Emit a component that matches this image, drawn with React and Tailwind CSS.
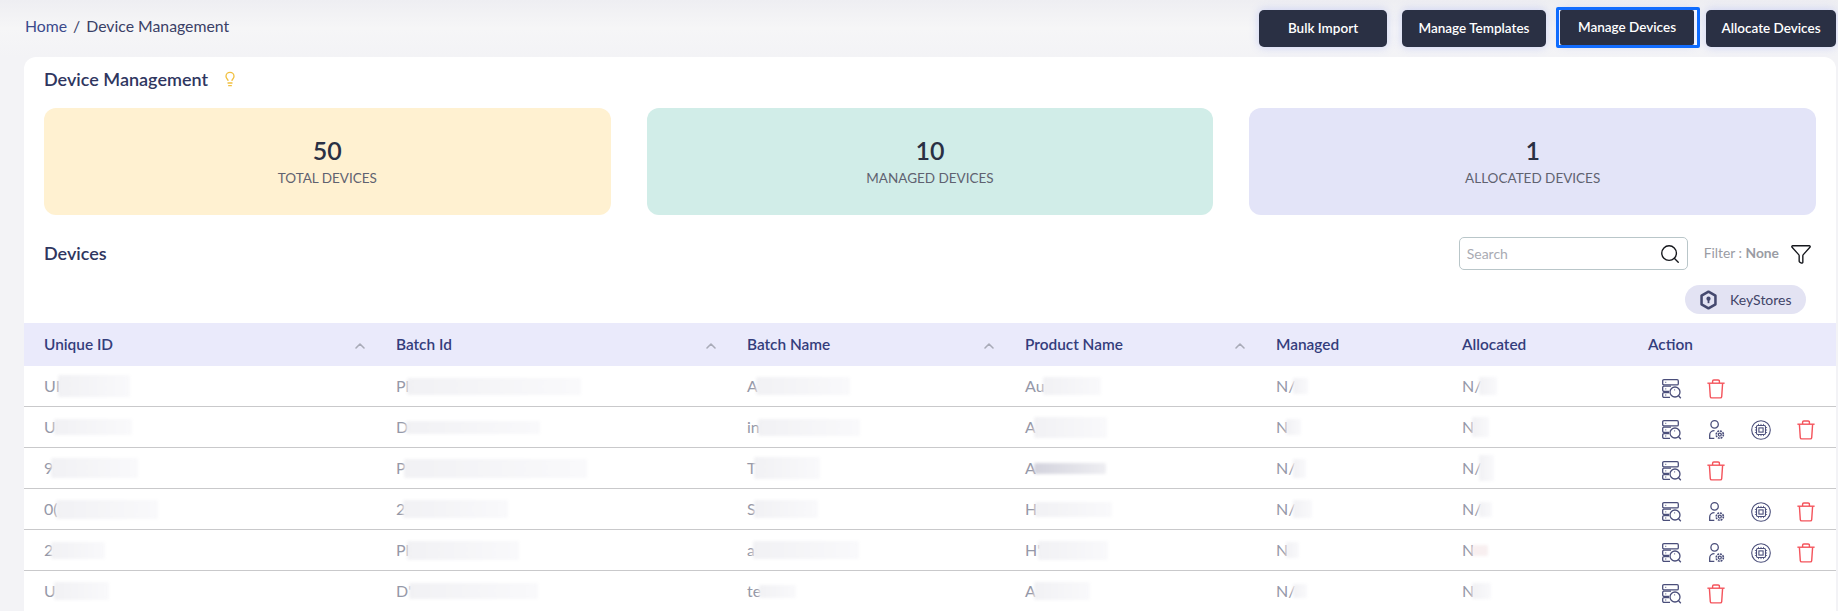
import React from 'react';
import { Lightbulb, Search, Funnel, ChevronUp } from 'lucide-react';

const columns = [
  { label: 'Unique ID', sort: true },
  { label: 'Batch Id', sort: true },
  { label: 'Batch Name', sort: true },
  { label: 'Product Name', sort: true },
  { label: 'Managed' },
  { label: 'Allocated' },
];

const gridCols = 'grid grid-cols-[352px_351px_278px_251px_186px_186px_1fr]';
const defaultTint = 'bg-gradient-to-r from-[#f1f1f4] to-[#f9f9fb]';

// each cell: visible start of the value, size of the blurred patch after it, optional tint
const rows = [
  { full: false, cells: [['UI', 'w-[72px] h-[22px]'], ['Pl', 'w-[174px] h-[17px]'], ['A', 'w-[94px] h-[18px]'], ['Au', 'w-[58px] h-[18px]'], ['N/', 'w-[15px] h-[16px]'], ['N/', 'w-[18px] h-[18px]']] },
  { full: true, cells: [['U', 'w-[78px] h-[16px]'], ['D', 'w-[134px] h-[13px]'], ['in', 'w-[102px] h-[17px]'], ['A', 'w-[73px] h-[21px]'], ['N', 'w-[15px] h-[16px]'], ['N', 'w-[17px] h-[20px]']] },
  { full: false, cells: [['9', 'w-[87px] h-[20px]'], ['P', 'w-[183px] h-[19px]'], ['T', 'w-[66px] h-[22px]'], ['A', 'w-[72px] h-[11px]', 'bg-gradient-to-r from-[#d3d3dd] to-[#eeeef2]'], ['N/', 'w-[13px] h-[19px]'], ['N/', 'w-[15px] h-[26px]']] },
  { full: true, cells: [['0(', 'w-[102px] h-[19px]'], ['2', 'w-[105px] h-[18px]'], ['S', 'w-[64px] h-[18px]'], ['H', 'w-[77px] h-[15px]'], ['N/', 'w-[19px] h-[18px]'], ['N/', 'w-[13px] h-[15px]']] },
  { full: true, cells: [['2', 'w-[54px] h-[17px]'], ['Pl', 'w-[112px] h-[19px]'], ['a', 'w-[106px] h-[18px]'], ["H'", 'w-[70px] h-[19px]'], ['N', 'w-[13px] h-[16px]'], ['N', 'w-[16px] h-[11px]', 'bg-[#f8eff0]']] },
  { full: false, cells: [['U', 'w-[55px] h-[18px]'], ["D'", 'w-[129px] h-[16px]'], ['te', 'w-[37px] h-[13px]'], ['A', 'w-[56px] h-[18px]'], ['N/', 'w-[14px] h-[14px]'], ['N', 'w-[19px] h-[16px]']] },
];

function ServerSearch() {
  return (
    <svg width="20" height="20" viewBox="0 0 20 20" fill="none" stroke="#4a4e7a" strokeWidth="1.3">
      <rect x="0.7" y="0.7" width="15.6" height="5.2" rx="1.2" />
      <path d="M9 7.2H2a1.3 1.3 0 0 0-1.3 1.3v2.6A1.3 1.3 0 0 0 2 12.4h5" />
      <path d="M7 13.6H2a1.3 1.3 0 0 0-1.3 1.3v2.2A1.3 1.3 0 0 0 2 18.4h6" />
      <circle cx="13" cy="13" r="5" />
      <path d="M16.6 16.8l2.2 2.4" />
      <path d="M3.4 3.3h.8M3.4 9.8h.8M3.4 16h.8M12.3 10.8h.8" />
    </svg>
  );
}

function UserGear() {
  return (
    <svg width="16" height="20" viewBox="0 0 16 20" fill="none" stroke="#4a4e7a" strokeWidth="1.3">
      <circle cx="5.6" cy="4.4" r="3.7" />
      <path d="M5.5 10.6C2.6 10.6.7 12.6.7 15v3.3h4.6" />
      <circle cx="10.8" cy="14.6" r="3.6" strokeDasharray="1.9 0.9" strokeWidth="1.6" />
      <circle cx="10.8" cy="14.6" r="1.5" />
    </svg>
  );
}

function ChipCircle() {
  return (
    <svg width="20" height="20" viewBox="0 0 20 20" fill="none" stroke="#4a4e7a" strokeWidth="1.1">
      <circle cx="10" cy="10" r="9.3" />
      <rect x="5.5" y="5.5" width="9" height="9" rx="1.2" />
      <rect x="7.9" y="7.9" width="4.2" height="4.2" />
      <path d="M7.5 3.9v1.4M10 3.9v1.4M12.5 3.9v1.4M7.5 14.7v1.4M10 14.7v1.4M12.5 14.7v1.4M3.9 7.5h1.4M3.9 10h1.4M3.9 12.5h1.4M14.7 7.5h1.4M14.7 10h1.4M14.7 12.5h1.4" strokeWidth="0.8" />
    </svg>
  );
}

function Trash() {
  return (
    <svg width="18" height="20" viewBox="0 0 18 20" fill="none" stroke="#f4545c" strokeWidth="1.4">
      <path d="M0.4 4.2h17.2" />
      <path d="M5.6 4V2.2A1.2 1.2 0 0 1 6.8 1h4.4a1.2 1.2 0 0 1 1.2 1.2V4" />
      <path d="M2.4 4.4l.9 13.2a1.4 1.4 0 0 0 1.4 1.3h8.6a1.4 1.4 0 0 0 1.4-1.3l.9-13.2" />
    </svg>
  );
}

function KeyHex() {
  return (
    <svg width="19" height="20" viewBox="0 0 18 19" fill="none">
      <path d="M9 1.6l6.6 3.8v8.2L9 17.4l-6.6-3.8V5.4z" stroke="#45496f" strokeWidth="2.4" strokeLinejoin="round" />
      <circle cx="9" cy="8.2" r="2" fill="#45496f" />
      <path d="M9 8.5v4" stroke="#45496f" strokeWidth="1.7" />
    </svg>
  );
}

function TopButton({ children, className = '' }) {
  return (
    <button className={`h-[37px] rounded-[5px] bg-[#2a3044] text-white text-[13.5px] font-semibold shadow-[0_0_10px_rgba(90,110,240,0.28)] ${className}`}>
      {children}
    </button>
  );
}

function StatCard({ value, label, color }) {
  return (
    <div className={`h-[107px] rounded-[12px] flex flex-col items-center pt-[26px] ${color}`}>
      <div className="text-[25px] leading-[32px] font-semibold text-[#2a3044]">{value}</div>
      <div className="mt-[2px] text-[13.5px] leading-[20px] text-[#5f6270]">{label}</div>
    </div>
  );
}

export default function App() {
  return (
    <div className="h-[611px] overflow-hidden bg-[#f3f3f6] font-['Lato',sans-serif]">
      {/* Top bar */}
      <div className="h-[57px] flex justify-between bg-gradient-to-b from-[#eeeef2] via-[#f6f6f7] to-[#f3f3f6]">
        <div className="pl-[25px] pt-[15px] text-[15.8px] leading-[22px] text-[#3a4066]">
          <span className="text-[#3b4a8c]">Home</span>
          <span className="mx-[6px]">/</span>
          <span>Device Management</span>
        </div>
        <div className="flex items-start pt-[10px] pr-[2px]">
          <TopButton className="w-[128px]">Bulk Import</TopButton>
          <TopButton className="w-[144px] ml-[15px]">Manage Templates</TopButton>
          <div className="ml-[10px] -mt-[3px] w-[144px] h-[41px] border-[3px] border-[#0b6cff] rounded-[2px] bg-white flex pl-px pr-[3px]">
            <TopButton className="flex-1 !h-full !rounded-[2px]">Manage Devices</TopButton>
          </div>
          <TopButton className="w-[130px] ml-[6px]">Allocate Devices</TopButton>
        </div>
      </div>

      {/* Main card */}
      <div className="ml-[24px] mr-[2px] h-[554px] bg-white rounded-t-[12px] overflow-hidden">
        <div className="h-[51px] pl-[20px] pt-[8px] flex items-center gap-[14px] pb-[15px]">
          <h1 className="text-[18px] font-semibold text-[#2f365f]">Device Management</h1>
          <Lightbulb size={16} className="text-[#f1c040]" strokeWidth={2} />
        </div>

        <div className="grid grid-cols-3 gap-[36px] pl-[20px] pr-[20px]">
          <StatCard value="50" label="TOTAL DEVICES" color="bg-[#fff1d1]" />
          <StatCard value="10" label="MANAGED DEVICES" color="bg-[#d1ede8]" />
          <StatCard value="1" label="ALLOCATED DEVICES" color="bg-[#e3e4f8]" />
        </div>

        <div className="flex items-start justify-between pl-[20px] pr-[24px] pt-[22px]">
          <h2 className="text-[18px] leading-[32px] font-semibold text-[#2f365f]">Devices</h2>
          <div className="flex items-center">
            <div className="w-[229px] h-[33px] border border-[#b9c6c9] rounded-[5px] flex items-center justify-between pl-[7px] pr-[6px]">
              <span className="text-[14px] text-[#a9abb3]">Search</span>
              <Search size={22} className="text-[#15171c]" strokeWidth={1.5} />
            </div>
            <span className="ml-[16px] text-[13.8px] text-[#9a9ca4]">Filter : <b className="font-bold">None</b></span>
            <Funnel size={22} className="ml-[11px] text-[#15171c]" strokeWidth={1.5} />
          </div>
        </div>

        <div className="flex justify-end pr-[30px] mt-[15px]">
          <div className="w-[121px] h-[29px] rounded-full bg-[#e3e3f3] flex items-center pl-[14px] gap-[12px]">
            <KeyHex />
            <span className="text-[14px] text-[#3f4468]">KeyStores</span>
          </div>
        </div>

        {/* Table */}
        <div className={`${gridCols} mt-[9px] h-[43px] items-center bg-[#eaeafb] text-[15.4px] font-semibold text-[#343d7c]`}>
          {columns.map((c) => (
            <div key={c.label} className="pl-[20px] pr-[8px] flex items-center justify-between">
              <span>{c.label}</span>
              {c.sort && <ChevronUp size={16} className="text-[#a9abb8] mt-[4px]" strokeWidth={2.4} />}
            </div>
          ))}
          <div className="pl-[20px]">Action</div>
        </div>

        {rows.map((row, i) => (
          <div key={i} className={`${gridCols} h-[41px] items-center border-b border-[#c9c9cb] text-[16px] text-[#9598a8]`}>
            {row.cells.map(([start, patch, tint], j) => (
              <div key={j} className="pl-[20px] flex items-center">
                <span>{start}</span>
                <span className={`${patch} ${tint || defaultTint} -ml-[2px] rounded-[2px] blur-[1.5px]`}></span>
              </div>
            ))}
            <div className="pl-[34px] pt-[5px] flex items-center">
              <div className="w-[45px]"><ServerSearch /></div>
              {row.full ? (
                <>
                  <div className="w-[44px] pl-[2px]"><UserGear /></div>
                  <div className="w-[46px]"><ChipCircle /></div>
                </>
              ) : null}
              <Trash />
            </div>
          </div>
        ))}
      </div>
    </div>
  );
}
